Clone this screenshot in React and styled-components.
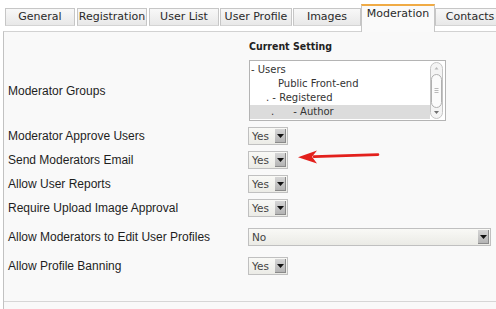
import React from "react";
import styled, { createGlobalStyle } from "styled-components";

const GlobalStyle = createGlobalStyle`
  html, body { margin: 0; padding: 0; background: #ffffff; }
  body { width: 496px; height: 309px; overflow: hidden; }
`;

const TABS = [
  { label: "General", w: 70, gap: 2 },
  { label: "Registration", w: 70, gap: 2 },
  { label: "User List", w: 70, gap: 1 },
  { label: "User Profile", w: 72, gap: 1 },
  { label: "Images", w: 68, gap: 0 },
  { label: "Moderation", w: 74, gap: 0, active: true },
  { label: "Contacts", w: 70, gap: 0 },
];

const GROUPS = [
  { text: "- Users", indent: 1 },
  { text: "Public Front-end", indent: 28 },
  { text: ". - Registered", indent: 16 },
  { text: ".      - Author", indent: 21, selected: true },
];

function ScrollBar() {
  return (
    <ScrollWrap>
      <svg width="14" height="58" viewBox="0 0 14 58">
        <rect x="0.5" y="0.5" width="12" height="56" rx="6" fill="#f4f4f4" stroke="#c4c4c4" />
        <path d="M4.5 7.5 L6.5 5 L8.5 7.5 Z" fill="#b8b8b8" />
        <rect x="1.5" y="12.5" width="10" height="33" rx="5" fill="#fbfbfb" stroke="#b0b0b0" />
        <path d="M4.5 26.5 H8.5 M4.5 28.5 H8.5 M4.5 30.5 H8.5" stroke="#a8a8a8" strokeWidth="0.8" />
        <path d="M4 49 L9 49 L6.5 52 Z" fill="#707070" />
      </svg>
    </ScrollWrap>
  );
}

function Select({ value, wide }) {
  return (
    <SelectBox wide={wide}>
      <SelectValue>{value}</SelectValue>
      <SelectButton>
        <svg width="7" height="4" viewBox="0 0 7 4">
          <path d="M0 0 H7 L3.5 4 Z" fill="#111" />
        </svg>
      </SelectButton>
    </SelectBox>
  );
}

function RedArrow() {
  return (
    <ArrowLayer>
      <svg width="84" height="18" viewBox="0 0 84 18">
        <path d="M80 5.6 L16 7.6" stroke="#e3201c" strokeWidth="2.6" strokeLinecap="round" />
        <path d="M0 8.2 L19 1.5 L14 7.8 L19 14.5 Z" fill="#e3201c" />
      </svg>
    </ArrowLayer>
  );
}

function App() {
  return (
    <>
      <GlobalStyle />
      <Page>
        <TabBar>
          {TABS.map((t) =>
            t.active ? (
              <ActiveTab key={t.label} w={t.w} gap={t.gap}>{t.label}</ActiveTab>
            ) : (
              <Tab key={t.label} w={t.w} gap={t.gap}>{t.label}</Tab>
            )
          )}
        </TabBar>

        <Panel>
          <Grid>
            <span />
            <HeaderCell>Current Setting</HeaderCell>

            <Label>Moderator Groups</Label>
            <ListBox>
              <ListItems>
                {GROUPS.map((g, i) => (
                  <ListItem key={i} indent={g.indent} selected={g.selected}>{g.text}</ListItem>
                ))}
              </ListItems>
              <ScrollBar />
            </ListBox>

            <Label>Moderator Approve Users</Label>
            <Select value="Yes" />

            <Label>Send Moderators Email</Label>
            <Select value="Yes" />

            <Label>Allow User Reports</Label>
            <Select value="Yes" />

            <Label>Require Upload Image Approval</Label>
            <Select value="Yes" />

            <Label spaced>Allow Moderators to Edit User Profiles</Label>
            <Spaced>
              <Select value="No" wide />
            </Spaced>

            <Label spaced>Allow Profile Banning</Label>
            <Spaced>
              <Select value="Yes" />
            </Spaced>
          </Grid>
          <Footer />
        </Panel>

        <RedArrow />
      </Page>
    </>
  );
}

const Page = styled.div`
  position: relative;
  width: 496px;
  height: 309px;
  overflow: hidden;
`;

const TabBar = styled.div`
  display: flex;
  align-items: flex-start;
  height: 31px;
  padding-left: 5px;
  box-sizing: border-box;
`;

const Tab = styled.div`
  flex: none;
  box-sizing: border-box;
  width: ${(p) => p.w}px;
  margin-right: ${(p) => p.gap}px;
  margin-top: 8px;
  height: 18px;
  border: 1px solid #c6c6c6;
  border-bottom-color: #d4d4d4;
  background: linear-gradient(#f8f8f8, #e8e8e8);
  font-family: "DejaVu Sans", Verdana, sans-serif;
  font-size: 11px;
  line-height: 15px;
  color: #2a2a2a;
  text-align: center;
  white-space: nowrap;
  overflow: hidden;
`;

const ActiveTab = styled(Tab)`
  margin-top: 4px;
  height: 28px;
  border-top: 2px solid #f0ab45;
  border-bottom: none;
  background: #fafafa;
  line-height: 15px;
  position: relative;
  z-index: 1;
`;

const Panel = styled.div`
  margin-left: 3px;
  height: 278px;
  box-sizing: border-box;
  border-left: 1px solid #c2c2c2;
  border-top: 1px solid #d2d2d2;
  background: #f9f9f9;
`;

const Grid = styled.div`
  display: grid;
  grid-template-columns: 244px 1fr;
  row-gap: 6px;
  align-items: center;
  padding: 6px 5px 0 0;
`;

const HeaderCell = styled.div`
  height: 16px;
  padding-left: 1px;
  font-family: "DejaVu Sans Condensed", "DejaVu Sans", sans-serif;
  font-weight: bold;
  font-size: 10.5px;
  line-height: 16px;
  color: #222;
`;

const Label = styled.div`
  padding-left: 4px;
  margin-top: ${(p) => (p.spaced ? 5 : 0)}px;
  font-family: "Liberation Sans", Arial, sans-serif;
  font-size: 12px;
  color: #1e1e1e;
  white-space: nowrap;
`;

const Spaced = styled.div`
  margin-top: 5px;
`;

const ListBox = styled.div`
  display: flex;
  box-sizing: border-box;
  width: 197px;
  height: 61px;
  margin-left: 1px;
  border: 1px solid #b4b4b4;
  background: #fff;
`;

const ListItems = styled.div`
  flex: 1;
  padding-top: 2px;
`;

const ListItem = styled.div`
  height: 14px;
  padding-left: ${(p) => p.indent}px;
  font-family: "DejaVu Sans", Verdana, sans-serif;
  font-size: 10px;
  line-height: 14px;
  color: #333;
  white-space: pre;
  background: ${(p) => (p.selected ? "#dcdcdc" : "transparent")};
`;

const ScrollWrap = styled.div`
  flex: none;
  width: 14px;
  padding-top: 1px;
  margin-right: 1px;
`;

const SelectBox = styled.div`
  display: flex;
  align-items: stretch;
  box-sizing: border-box;
  width: ${(p) => (p.wide ? 243 : 40)}px;
  height: 18px;
  border: 1px solid #c0c0c0;
  background: linear-gradient(#f9f9f6, #ebebe6);
`;

const SelectValue = styled.div`
  flex: 1;
  padding-left: 3px;
  font-family: "DejaVu Sans", Verdana, sans-serif;
  font-size: 10.5px;
  line-height: 16px;
  color: #444;
`;

const SelectButton = styled.div`
  flex: none;
  display: flex;
  align-items: center;
  justify-content: center;
  width: 11px;
  margin: 1px;
  background: linear-gradient(#d6d6d6, #b4b4b4);
  border-right: 1px solid #8a8a8a;
  border-bottom: 1px solid #8a8a8a;
  box-sizing: border-box;
`;

const Footer = styled.div`
  margin-top: 26px;
  border-top: 1px solid #d6d6d6;
`;

const ArrowLayer = styled.div`
  position: absolute;
  left: 298px;
  top: 149px;
  line-height: 0;
`;

export default App;
